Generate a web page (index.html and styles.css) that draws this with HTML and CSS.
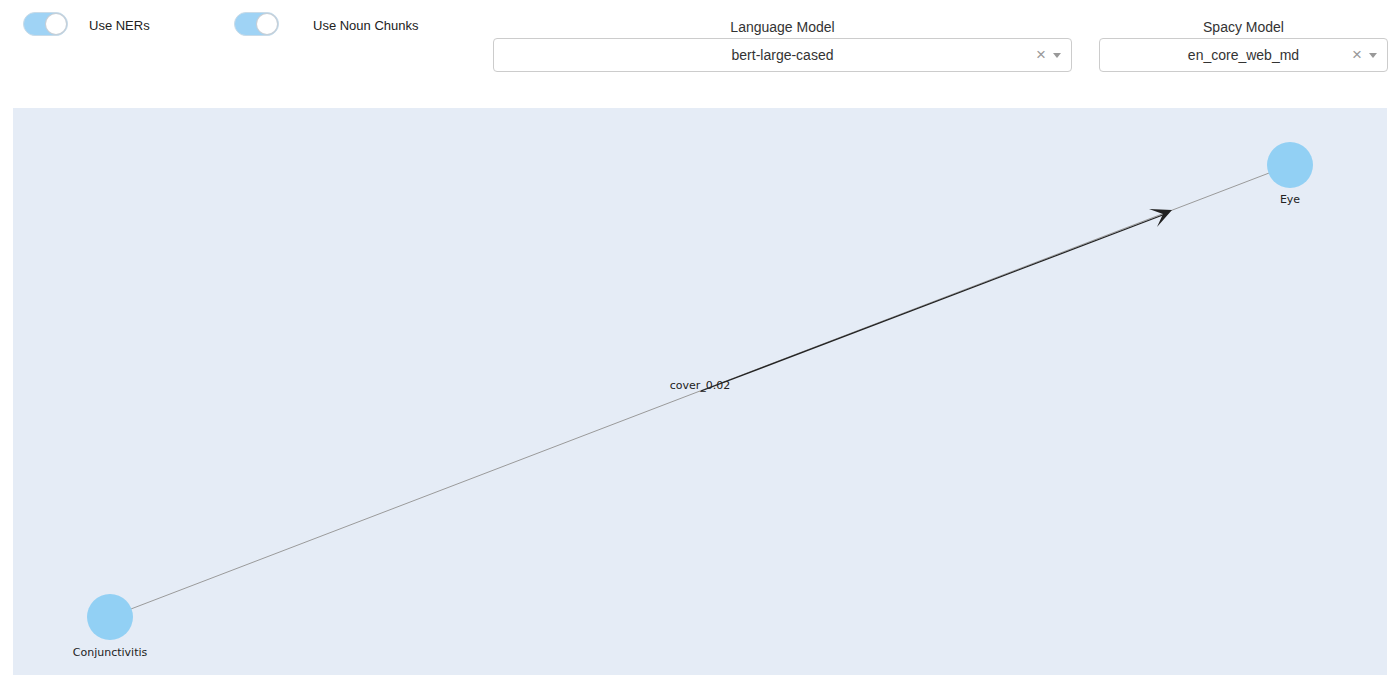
FILE: index.html
```html
<!DOCTYPE html>
<html>
<head>
<meta charset="utf-8">
<link rel="stylesheet" href="styles.css">
</head>
<body>
<div class="page">
  <div class="controls">
    <div class="switch-item first">
      <span class="switch"><span class="knob"></span></span>
      <span class="switch-label">Use NERs</span>
    </div>
    <div class="switch-item second">
      <span class="switch"><span class="knob"></span></span>
      <span class="switch-label">Use Noun Chunks</span>
    </div>
    <div class="field lang">
      <div class="field-label">Language Model</div>
      <div class="select">
        <span class="value">bert-large-cased</span>
        <span class="clear">×</span>
        <span class="caret"></span>
      </div>
    </div>
    <div class="field spacy">
      <div class="field-label">Spacy Model</div>
      <div class="select">
        <span class="value">en_core_web_md</span>
        <span class="clear">×</span>
        <span class="caret"></span>
      </div>
    </div>
  </div>
  <div class="plot">
    <svg class="graph" width="1374" height="567" viewBox="0 0 1374 567">
      <line x1="97" y1="509" x2="1277" y2="57" stroke="#9a9a9a" stroke-width="1"/>
      <line x1="688" y1="283" x2="1155" y2="105" stroke="#222" stroke-width="1.2"/>
      <polygon points="1159,102 1136,101 1150,106 1144,119" fill="#222"/>
      <circle cx="97" cy="509" r="23" fill="#92d0f4"/>
      <circle cx="1277" cy="57" r="23" fill="#92d0f4"/>
      <text class="node-label" x="97" y="548" text-anchor="middle">Conjunctivitis</text>
      <text class="node-label" x="1277" y="95" text-anchor="middle">Eye</text>
      <text class="node-label" x="687" y="281" text-anchor="middle">cover_0.02</text>
    </svg>
  </div>
</div>
</body>
</html>
```
FILE: styles.css
```css
html, body {
  margin: 0;
  padding: 0;
  background: #fff;
  font-family: "Liberation Sans", Arial, sans-serif;
  color: #222;
}
.page {
  width: 1400px;
  height: 689px;
  overflow: hidden;
}
.controls {
  display: flex;
  align-items: flex-start;
  height: 108px;
}
.switch-item {
  display: flex;
  align-items: center;
  margin-top: 12px;
}
.switch-item.first {
  margin-left: 23px;
  width: 211px;
}
.switch-item.second {
  width: 259px;
}
.switch {
  position: relative;
  width: 45px;
  height: 24px;
  border-radius: 12px;
  background: #9fd3f5;
  box-sizing: border-box;
  border: 1px solid #c9dbe8;
}
.knob {
  position: absolute;
  right: 1px;
  top: 1px;
  width: 20px;
  height: 20px;
  border-radius: 50%;
  background: #fff;
  box-shadow: 0 0 0 1px #c8cfd6;
}
.switch-label {
  font-size: 13px;
  color: #222;
  padding-top: 2px;
}
.first .switch-label { margin-left: 21px; }
.second .switch-label { margin-left: 34px; }
.field {
  display: flex;
  flex-direction: column;
  align-items: stretch;
  margin-top: 19px;
}
.field.lang { width: 579px; }
.field.spacy { width: 289px; margin-left: 27px; }
.field-label {
  text-align: center;
  font-size: 14px;
  line-height: 17px;
  color: #333;
}
.select {
  position: relative;
  margin-top: 2px;
  height: 34px;
  box-sizing: border-box;
  border: 1px solid #ccc;
  border-radius: 4px;
  display: flex;
  align-items: center;
  justify-content: center;
}
.value {
  font-size: 14px;
  color: #333;
}
.clear {
  position: absolute;
  right: 25px;
  top: 7px;
  font-size: 17px;
  color: #999;
  line-height: 18px;
}
.caret {
  position: absolute;
  right: 10px;
  top: 14px;
  width: 0;
  height: 0;
  border-left: 4px solid transparent;
  border-right: 4px solid transparent;
  border-top: 5px solid #999;
}
.plot {
  margin-left: 13px;
  width: 1374px;
  height: 567px;
  background: #e5ecf6;
}
.graph {
  display: block;
}
.node-label {
  font-family: "DejaVu Sans", Verdana, sans-serif;
  font-size: 11px;
  fill: #222;
}
```
